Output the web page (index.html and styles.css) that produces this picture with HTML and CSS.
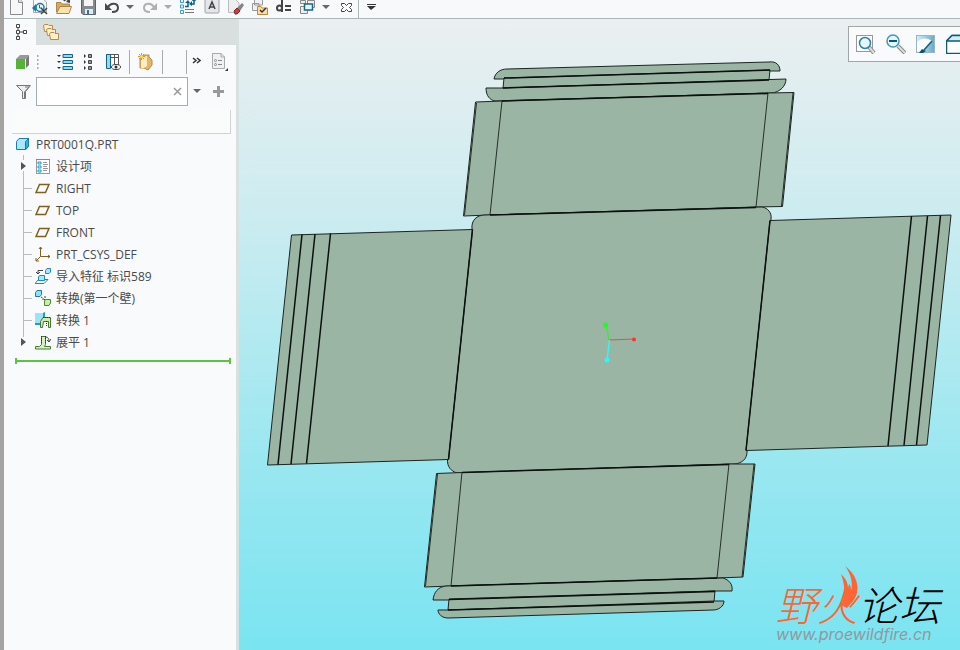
FILE: index.html
```html
<!DOCTYPE html>
<html lang="zh-CN">
<head>
    <meta charset="UTF-8">
    <meta name="viewport" content="width=device-width, initial-scale=1.0">
    <title>PRT0001Q.PRT</title>
    <link rel="stylesheet" href="styles.css">
</head>
<body>
    <div class="app">
        <header class="quickbar">
            <button class="icon" aria-label="新建"><svg width="16" height="16"><path d="M2.500-1H10.500L14.500 3V15.500H2.500Z" fill="#f6f7f8" stroke="#8b8b8b"/><path d="M10.500-1V3.500H14.500" fill="#ddd" stroke="#8b8b8b"/></svg></button>
            <button class="icon" aria-label="检查"><svg width="16" height="16"><path d="M1.500 0V13.500H14.500V3L11 0" fill="#f6f7f8" stroke="#aaa"/><circle cx="8" cy="8.500" r="4" fill="#e4f6fc" stroke="#1d7aa5" stroke-width="1.500"/><path d="M0 9L4 5V13Z" fill="#1d7aa5"/><path d="M7.500 6V9H10" fill="none" stroke="#1d7aa5"/><path d="M9 9L15 15M15 9L9 15" stroke="#444" stroke-width="1.500"/></svg></button>
            <button class="icon" aria-label="打开"><svg width="16" height="16"><path d="M.500 13V3.500H5L6.500 5H13.500V8" fill="#d8a760" stroke="#b08443"/><path d="M.500 14.500L4 7.500H15.500L13 14.500Z" fill="#fbe3ab" stroke="#b08443"/><path d="M8 2C9 0 11 0 13 1" fill="none" stroke="#444" stroke-width="2"/><path d="M14-1V4L10 3Z" fill="#444"/></svg></button>
            <button class="icon" aria-label="保存"><svg width="16" height="16"><path d="M1.500 0H15.500V15.500H3L1.500 14Z" fill="#858a8e" stroke="#606568"/><path d="M4 0H13V7H4Z" fill="#f5f5f5"/><path d="M5 10H13V15H5Z" fill="#d9edf6"/><path d="M7 11H9V15H7Z" fill="#3c7390"/></svg></button>
            <div class="split">
                <button class="icon" aria-label="撤消"><svg width="16" height="16"><path d="M4 8C7 3 14 4 14 9C14 12 11 13 8 13" fill="none" stroke="#444b4d" stroke-width="2"/><path d="M1 4V11H8Z" fill="#444b4d"/></svg></button>
                <button class="arrow" aria-label="撤消列表"><svg width="8" height="16"><path d="M0 6H8L4 10Z" fill="#666"/></svg></button>
            </div>
            <div class="split">
                <button class="icon" aria-label="重做"><svg width="16" height="16"><path d="M12 8C9 3 2 4 2 9C2 12 5 13 8 13" fill="none" stroke="#adb1b2" stroke-width="2"/><path d="M15 4V11H8Z" fill="#adb1b2"/></svg></button>
                <button class="arrow" aria-label="重做列表"><svg width="8" height="16"><path d="M0 6H8L4 10Z" fill="#aaa"/></svg></button>
            </div>
            <button class="icon" aria-label="重新生成"><svg width="16" height="16"><path d="M.500 0H3.500V3.500H.500ZM.500 6H3.500V9H.500ZM.500 11.500H3.500V14.500H.500Z" fill="#e5f7ff" stroke="#3a9cc6"/><path d="M5 10.500H14M5 13.500H14" stroke="#777"/><path d="M5 7.500H8V3M14 2V5H11" fill="none" stroke="#0c5d87" stroke-width="1.500"/><path d="M5 4L8 1L10 4ZM12 2L14-1L16 2ZM12 2V7L9 5Z" fill="#0c5d87"/></svg></button>
            <button class="icon" aria-label="注释"><svg width="16" height="16"><rect x="1" y="-1" width="14" height="15" rx="1" fill="#e3e7ea" stroke="#9da4a8"/><path d="M5 10L8 3L11 10M6 8H10" fill="none" stroke="#444" stroke-width="1.500"/></svg></button>
            <button class="icon" aria-label="擦除"><svg width="16" height="16"><path d="M.500 0H7L11 4V13.500H.500Z" fill="#eceeef" stroke="#bbb"/><path d="M9 9L14 4L16 6L12 12Z" fill="#858585"/><path d="M6 12L9 9L12 12L9 15H7Z" fill="#c83f36" stroke="#8c2a22"/></svg></button>
            <button class="icon" aria-label="窗口检查"><svg width="16" height="16"><path d="M2.500 0H10.500V6H2.500ZM.500 4.500H7V11.500H.500Z" fill="#f0f1f2" stroke="#9a9a9a"/><path d="M5.500 7.500H9L10 9H15.500V15.500H5.500Z" fill="#fbdc9d" stroke="#b88a45"/><path d="M8 11L10 13L14 9" fill="none" stroke="#333" stroke-width="1.500"/></svg></button>
            <button class="icon" aria-label="关系"><svg width="16" height="16"><path d="M6-1V13" stroke="#444" stroke-width="2"/><circle cx="3.500" cy="9" r="2.500" fill="none" stroke="#444" stroke-width="2"/><path d="M9 7H15M9 11H15" stroke="#444" stroke-width="2"/></svg></button>
            <div class="split">
                <button class="icon" aria-label="窗口"><svg width="16" height="16"><path d="M7.500 1.500H14.500V8.500H7.500ZM.500 1.500H5.500V4.500H.500ZM.500 7.500H7.500V14.500H.500Z" fill="#edf0f1" stroke="#888"/><rect x="4.500" y="5" width="8" height="6" fill="#e5f8ff" stroke="#1b668b" stroke-width="1.500"/></svg></button>
                <button class="arrow" aria-label="窗口列表"><svg width="8" height="16"><path d="M0 6H8L4 10Z" fill="#666"/></svg></button>
            </div>
            <button class="icon" aria-label="关闭"><svg width="16" height="16"><path d="M3.500 4.500H6.500L8.500 6.500L10.500 4.500H13.500V6.500L11.500 8.500L13.500 10.500V12.500H10.500L8.500 10.500L6.500 12.500H3.500V10.500L5.500 8.500L3.500 6.500Z" fill="#fff" stroke="#444"/></svg></button>
            <span class="quickbar-divider"></span>
            <button class="arrow" aria-label="自定义"><svg width="9" height="16"><path d="M0 5.500H9" stroke="#333"/><path d="M0 7H9L4 11Z" fill="#333"/></svg></button>
        </header>

        <main class="workspace">
            <aside class="sidebar">
                <div class="tabs">
                    <button class="tab active" aria-label="模型树"><svg width="16" height="18"><path d="M4 5V13M4 9H10" stroke="#444"/><path d="M2.500 1.500H5.500V4.500H2.500ZM2.500 7.500H5.500V10.500H2.500ZM2.500 13.500H5.500V16.500H2.500ZM9.500 7.500H12.500V10.500H9.500Z" fill="#fff" stroke="#444"/></svg></button>
                    <button class="tab" aria-label="层"><svg width="18" height="18"><g fill="#fff0cc" stroke="#b78a45"><path d="M.500 2.500L2 1.500H5L6 2.500H9.500V8.500H1.500Z"/><path d="M3.500 6.500L5 5.500H8L9 6.500H12.500V12.500H4.500Z"/><path d="M6.500 10.500L8 9.500H11L12 10.500H15.500V16.500H7.500Z"/></g></svg></button>
                </div>

                <div class="tree-tools">
                    <button class="icon" aria-label="模型"><svg width="14" height="18"><path d="M1 6L5 2H14L11 6Z" fill="#999"/><path d="M11 6L14 2V12L11 15Z" fill="#777"/><path d="M1 6H10V16H1Z" fill="#55b435"/></svg></button>
                    <svg width="4" height="18"><path d="M0 2V17" stroke="#aaa" stroke-width="3" stroke-dasharray="2 2"/></svg>
                    <button class="icon tool-list" aria-label="展开"><svg width="16" height="18"><path d="M0 2H4L2 4ZM0 8H4L2 10ZM0 14H4L2 16Z" fill="#333"/><path d="M6 1.500H15.500V4.500H6ZM6 7.500H15.500V10.500H6ZM6 13.500H15.500V16.500H6Z" fill="#88dcf8" stroke="#176487"/></svg></button>
                    <button class="icon" aria-label="收起"><svg width="16" height="18"><path d="M3 1V5L5 3ZM3 7V11L5 9ZM3 13V17L5 15Z" fill="#333"/><path d="M7.500 1.500H10.500V4.500H7.500ZM7.500 7.500H10.500V10.500H7.500ZM7.500 13.500H10.500V16.500H7.500Z" fill="#999" stroke="#444"/></svg></button>
                    <button class="icon" aria-label="树列"><svg width="16" height="18"><path d="M1.500 1.500H13.500V14.500H1.500Z" fill="#fff" stroke="#555"/><path d="M1.500 1.500H5.500V15.500H1.500Z" fill="#88dcf8" stroke="#176487"/><path d="M9.500 1V11M5 4.500H14" stroke="#555"/><ellipse cx="11" cy="14" rx="4.500" ry="2.500" fill="#fff" stroke="#444"/><circle cx="11" cy="14" r="1.500" fill="#333"/></svg></button>
                    <span class="tool-divider"></span>
                    <button class="icon" aria-label="新建层"><svg width="16" height="18"><path d="M5 2H11V4L14 7V12L10 17L6 15H2V5Z" fill="#e3b46c" stroke="#bd8c46"/><path d="M3 4L9 3V13L6 15H3Z" fill="#ffedbc"/><path d="M3.500 0V7M0 3.500H7M1 1L6 6M6 1L1 6" stroke="#ef8c20"/><circle cx="3.500" cy="3.500" r="1.500" fill="#ffdf55"/></svg></button>
                    <span class="tool-divider"></span>
                    <span class="tool-divider tool-divider-last"></span>
                    <button class="more" aria-label="更多"><svg width="9" height="18"><path d="M1 5L4 7.500L1 10M5 5L8 7.500L5 10" fill="none" stroke="#333" stroke-width="1.500"/></svg></button>
                    <button class="icon" aria-label="显示选项"><svg width="18" height="18"><path d="M1.500 .500H10L13.500 4V15.500H1.500Z" fill="#eff1f3" stroke="#aaa"/><path d="M10 0V4H14" fill="none" stroke="#aaa"/><path d="M7 7.500H11M7 11.500H11" stroke="#888"/><circle cx="4.500" cy="7.500" r="1" fill="none" stroke="#888"/><circle cx="4.500" cy="11.500" r="1" fill="none" stroke="#888"/><path d="M17 15V18H14Z" fill="#333"/></svg></button>
                </div>

                <div class="filter">
                    <svg width="15" height="16"><path d="M.500 1.500H14.500L9.500 7.500V14.500H6.500V7.500Z" fill="#eee" stroke="#777"/><path d="M9 3H13L8.500 8V14" fill="none" stroke="#777"/></svg>
                    <div class="filter-box">
                        <input type="text" id="filter" aria-label="过滤">
                        <button class="clear" aria-label="清除"><svg width="9" height="9"><path d="M1 1L8 8M8 1L1 8" stroke="#999" stroke-width="1.500"/></svg></button>
                    </div>
                    <button class="arrow" aria-label="过滤选项"><svg width="8" height="16"><path d="M0 5H8L4 9Z" fill="#666"/></svg></button>
                    <button class="add" aria-label="添加"><svg width="12" height="16"><path d="M0 7.500H11M5.500 2V13" stroke="#999" stroke-width="3"/></svg></button>
                </div>

                <div class="tree-head"></div>

                <ul class="tree">
                    <li class="root"><svg width="16" height="16"><path d="M.500 5.500L3 2.500H12.500V10L10 13.500H.500Z" fill="#a8e8fb" stroke="#1e7da5"/><path d="M9.500 5.500L12.500 2.500V10L9.500 13.500Z" fill="#39add5" stroke="#1e7da5"/></svg><span>PRT0001Q.PRT</span></li>
                    <li><button class="twig toggle first" aria-label="展开设计项"></button><svg width="16" height="16"><rect x="1.500" y="1.500" width="13" height="14" fill="#fff" stroke="#999"/><path d="M1 1.500H15" stroke="#32a5d0"/><path d="M3 4H6V6H3ZM3 8H6V10H3ZM3 12H6V14H3Z" fill="#fff" stroke="#179bd0"/><path d="M8 4.500H12M8 6.500H13M8 8.500H12M8 10.500H13M8 12.500H12" stroke="#999"/></svg><span>设计项</span></li>
                    <li><span class="twig"></span><svg width="16" height="16"><path d="M4.500 4.500H14L10.500 12.500H1Z" fill="none" stroke="#80601f" stroke-width="1.500"/></svg><span>RIGHT</span></li>
                    <li><span class="twig"></span><svg width="16" height="16"><path d="M4.500 4.500H14L10.500 12.500H1Z" fill="none" stroke="#80601f" stroke-width="1.500"/></svg><span>TOP</span></li>
                    <li><span class="twig"></span><svg width="16" height="16"><path d="M4.500 4.500H14L10.500 12.500H1Z" fill="none" stroke="#80601f" stroke-width="1.500"/></svg><span>FRONT</span></li>
                    <li><span class="twig"></span><svg width="16" height="16"><path d="M5.500 1V10.500H15M5.500 10.500L1 15M4 3L5.500 1L7 3M13 9L15 10.500L13 12M1 12V15H4" fill="none" stroke="#80601f"/></svg><span>PRT_CSYS_DEF</span></li>
                    <li><span class="twig"></span><svg width="16" height="16"><path d="M10.500 2.500L12 .500H15.500V4L14 5.500H10.500ZM3.500 8.500L5 7.500H9.500V12.500H3.500Z" fill="#a8e8fb" stroke="#1e8ab5"/><path d="M3 12L0 15.500H9L13 11.500H10" fill="none" stroke="#1e8ab5"/><path d="M3 5V2.500H8M1 4L3 6L5 4" fill="none" stroke="#444"/></svg><span>导入特征 标识589</span></li>
                    <li><span class="twig"></span><svg width="16" height="16"><path d="M.500 2.500L2 .500H6.500V4.500L5 6.500H.500Z" fill="#8fdff8" stroke="#1e7da5"/><path d="M9.500 10.500L11 9.500H15.500V13L14 15.500H9.500Z" fill="#c6efae" stroke="#498b2e"/><path d="M6 7L9 9M10 6V9.500H7" fill="none" stroke="#444" stroke-dasharray="2 1"/></svg><span>转换(第一个壁)</span></li>
                    <li><span class="twig"></span><svg width="16" height="16"><path d="M0 1H8V10L5 13H0Z" fill="#9ee3f7"/><path d="M8 1L10 0V6L6 11L8 8Z" fill="#2b9ac2"/><path d="M0 11H5V13H0Z" fill="#2b9ac2"/><path d="M5.500 9.500L8 5.500H15.500V15.500H13.500V9.500H8.500L7.500 15.500H5.500Z" fill="#c6efae" stroke="#47772f"/><path d="M8 5.500H15.500M11.500 9V14" stroke="#333" stroke-dasharray="1 1"/></svg><span>转换 1</span></li>
                    <li><button class="twig toggle last" aria-label="展开展平 1"></button><svg width="16" height="16"><path d="M.500 12.500H4.500L6.500 10.500V2.500H10.500V10.500L9.500 12.500H15.500V15H.500Z" fill="#d4f0c5" stroke="#467b32"/><path d="M6.500 2V9M10.500 2V10" stroke="#333" stroke-dasharray="1 1"/><path d="M11 3C13 3 14 5 14 7M12 6L14 8L16 5" fill="none" stroke="#444"/></svg><span>展平 1</span></li>
                </ul>
                <div class="insert-line"></div>
            </aside>

            <section class="viewport">
                <svg class="model" viewBox="239 19 721 631" role="img" aria-label="钣金展平模型">
                    <g class="plate">
                        <path d="M494 79C495 73 500 69 507 69L769 62C776 61 780 65 780 71H770L504 79Z"/>
                        <path d="M504 78L770 70L769 80L503 88Z"/>
                        <path d="M486 88H503L786 79C786 86 780 92 772 93L495 101C490 100 486 96 486 88Z"/>
                        <path d="M475.500 102L502 101L768 93L794 92.500L782.500 206.500L756 207L490 215L463.500 216Z"/>
                        <path d="M472 229C471 220 477 215 485 215L762 207C768 208 772 213 771 219L747 452C747 459 742 463 735 464L457 473C451 471 447 467 447.500 459Z"/>
                        <path d="M291.500 235L472.500 229.500L448.500 459.500L267.500 465Z"/>
                        <path d="M770 220.500L951 215L927 445L746 450.500Z"/>
                        <path d="M436.500 473.500L462 472.500L729 464L755 464L743 577L717 578L451 586L424.500 587Z"/>
                        <path d="M433 600C434 592 438 587 446 586L723 578C729 580 733 584 732 591H715L449 600Z"/>
                        <path d="M449 599L715 591L714 602L448 610Z"/>
                        <path d="M438 610H448L714 601H724C724 606 719 610 713 610L448 618C442 618 438 614 438 610Z"/>
                    </g>
                    <g class="edges">
                        <path d="M502 101L490 215M768 93L756 207M462 472L451 586M729 464L717 578"/>
                        <path d="M476.500 103L464.500 215M793 93L781.500 206M437.500 474L425.500 586M754 464L742 577"/>
                    </g>
                    <g class="folds">
                        <path d="M302 234.500L278 464.500M315 234L291 464M330.500 233.500L306.500 463.500"/>
                        <path d="M911.500 216L888 446M927.500 216L904 445.500M940.500 215.500L916.500 445"/>
                        <path d="M472.500 229.500L448.500 459.500M770 220.500L746 450.500M490 215L756 207.500M462 472.500L729 464.500"/>
                        <path d="M504 78L770 70M503 88L769 80M502 101L768 93.500M451 586L717 578M449 599.500L715 591.500M448 610L714 602"/>
                    </g>
                    <path d="M609 340L606 325" stroke="#43e83b" stroke-width="1.500"/>
                    <path d="M609 340L634 339" stroke="#f04a43"/>
                    <path d="M609.500 340L607 360" stroke="#3df3f2" stroke-width="1.500"/>
                    <circle cx="605.500" cy="325" r="2.500" fill="#22fa25"/>
                    <circle cx="634" cy="339.500" r="2" fill="#ff3232"/>
                    <circle cx="607" cy="360" r="2.500" fill="#28fafa"/>
                </svg>

                <div class="view-tools">
                    <button class="view-icon" aria-label="重新调整"><svg width="20" height="20"><rect x=".500" y="1.500" width="16" height="16" fill="#fff" stroke="#999"/><path d="M13 13L18 19" stroke="#888" stroke-width="4"/><path d="M13 13L18 19" stroke="#ddd" stroke-width="2"/><circle cx="9" cy="9" r="5.500" fill="#e4f7fd" stroke="#327f9f" stroke-width="1.500"/></svg></button>
                    <button class="view-icon" aria-label="缩小"><svg width="20" height="20"><path d="M12 12L19 19" stroke="#888" stroke-width="4"/><path d="M12 12L19 19" stroke="#ddd" stroke-width="2"/><circle cx="7" cy="7" r="6" fill="#e4f7fd" stroke="#4796b4" stroke-width="1.500"/><path d="M3 7H11" stroke="#0d5476" stroke-width="2"/></svg></button>
                    <button class="view-icon" aria-label="重画"><svg width="20" height="20"><defs><linearGradient id="repaint"><stop offset="0" stop-color="#d5f1f8"/><stop offset="1" stop-color="#65abc5"/></linearGradient></defs><rect x=".500" y="1.500" width="18" height="17" fill="url(#repaint)" stroke="#99b7c2"/><path d="M1 8C6 3 12 4 16 7L7 16L1 18Z" fill="#fff"/><path d="M16 7L8 16" stroke="#165f7c" stroke-width="1.500"/><path d="M3 19L6 15L10 17L7 19Z" fill="#0d5370"/></svg></button>
                    <button class="view-icon" aria-label="显示样式"><svg width="20" height="20"><path d="M.500 7L6 1.500H19V19.500H.500Z" fill="#fff" stroke="#12587b" stroke-width="1.500"/><path d="M.500 7L6 1.500H19V7Z" fill="#caf1fb" stroke="#12587b" stroke-width="1.500"/></svg></button>
                </div>

                <div class="watermark">
                    <div class="brand"><span class="brand-hot">野火</span>论坛</div>
                    <div class="site">www.proewildfire.cn</div>
                    <svg class="flame" width="20" height="44"><path d="M4 0C15 8 19 20 15 30C13 35 9 38 6 42L0 39C4 32 5 22 0 8C4 12 7 16 7 22L8 18C10 20 10 22 10 25C12 17 10 8 4 0Z" fill="#ff6434"/></svg>
                </div>
            </section>
        </main>
    </div>
</body>
</html>
```
FILE: styles.css
```css
* {
    box-sizing: border-box;
}
body {
    margin: 0;
    font-family: "Open Sans", "Noto Sans CJK SC", sans-serif;
    font-size: 12px;
    color: #4a4a4a;
}
button {
    display: flex;
    flex: none;
    padding: 0;
    border: none;
    background: none;
    cursor: pointer;
}
svg {
    display: block;
    flex: none;
}
.app {
    display: flex;
    flex-direction: column;
    height: 100vh;
    border-left: 4px solid #a5a2a2;
    overflow: hidden;
}

/* barre du haut */
.quickbar {
    display: flex;
    align-items: flex-end;
    gap: 8px;
    flex: none;
    height: 19px;
    padding: 0 4px 3px;
    background: #f7f9fb;
    border-bottom: 1px solid #a9b9b9;
    overflow: hidden;
}
.split {
    display: flex;
    gap: 6px;
}
.quickbar-divider {
    align-self: flex-end;
    width: 1px;
    height: 18px;
    margin: 0 0 -3px -4px;
    background: #a9b9b9;
}
.workspace {
    display: flex;
    flex: 1;
    min-height: 0;
}

/* arbre du modele */
.sidebar {
    flex: none;
    width: 235px;
    background: #f8fafc;
    border-right: 3px solid #d9e0e1;
}
.tabs {
    display: flex;
    height: 26px;
    background: #d9dfdf;
}
.tab {
    align-items: center;
    width: 32px;
    padding-left: 7px;
}
.tab.active {
    padding-left: 10px;
    background: #f8fafc;
}
.tree-tools {
    display: flex;
    align-items: center;
    gap: 8px;
    height: 31px;
    padding: 2px 0 0 11px;
}
.tool-list {
    margin-left: 8px;
}
.tool-divider {
    width: 1px;
    height: 24px;
    background: #aaa;
}
.tool-divider-last {
    margin-left: 15px;
}
.more {
    margin: 0 2px 0 -3px;
}
.filter {
    display: flex;
    align-items: center;
    gap: 5px;
    padding: 1px 11px 0 12px;
}
.filter-box {
    display: flex;
    align-items: center;
    flex: 1;
    min-width: 0;
    height: 29px;
    padding-right: 5px;
    background: #fff;
    border: 1px solid #9eafb0;
}
.filter-box input {
    flex: 1;
    min-width: 0;
    height: 24px;
    border: none;
    outline: none;
    background: none;
    font: inherit;
}
.add {
    margin-left: 7px;
}
.tree-head {
    height: 24px;
    margin: 4px 5px 0 8px;
    background: #fafbfb;
    border-right: 1px solid #cfd3d4;
    border-bottom: 1px solid #cfd3d4;
}
.tree {
    margin: -1px 0 0;
    padding: 0 0 0 12px;
    list-style: none;
}
.tree li {
    display: flex;
    align-items: center;
    height: 22px;
    white-space: nowrap;
}
.tree li > span:last-child {
    margin-left: 5px;
}
.tree .root > span:last-child {
    margin-left: 4px;
}
.twig {
    flex: none;
    width: 19px;
    height: 22px;
    background: linear-gradient(#bbb, #bbb) 7px 0 / 1px 100% no-repeat,
                linear-gradient(#bbb, #bbb) 7px 11px / 9px 1px no-repeat;
}
.toggle {
    align-items: center;
    padding-left: 5px;
}
.toggle::before {
    content: "";
    border: 4px solid transparent;
    border-left: 5px solid #555;
    border-right: none;
}
.toggle.first {
    background: linear-gradient(#bbb 5px, transparent 5px, transparent 16px, #bbb 16px) 7px 0 / 1px 100% no-repeat;
}
.toggle.last {
    background: linear-gradient(#bbb, #bbb) 7px 0 / 1px 6px no-repeat;
}
.insert-line {
    height: 6px;
    margin: 5px 5px 0 11px;
    border: solid #5fc342;
    border-width: 0 2px;
    background: linear-gradient(#5fc342, #5fc342) center / 100% 2px no-repeat;
}

/* zone graphique */
.viewport {
    position: relative;
    flex: 1;
    min-width: 0;
    background: linear-gradient(#ebeff0, #cdecf0 30%, #9ae7f0 70%, #7ae4f1);
    overflow: hidden;
}
.model {
    width: 100%;
    height: 100%;
}
.plate {
    fill: #9ab5a4;
    stroke: #1c2420;
    stroke-width: 1;
}
.edges {
    fill: none;
    stroke: #26302b;
    stroke-width: 1;
}
.folds {
    fill: none;
    stroke: #0c100e;
    stroke-width: 1.5;
}
.view-tools {
    position: absolute;
    top: 7px;
    right: 0;
    display: flex;
    align-items: center;
    gap: 10px;
    width: 112px;
    height: 36px;
    padding-left: 7px;
    background: #f8fafc;
    border: 1px solid #a3a6a8;
    border-right: none;
    overflow: hidden;
}
.watermark {
    position: absolute;
    right: 20px;
    bottom: 8px;
    white-space: nowrap;
}
.brand {
    margin-bottom: 2px;
    font-family: "Noto Sans CJK SC", sans-serif;
    font-size: 41px;
    font-style: italic;
    font-weight: 300;
    line-height: 42px;
    color: #000;
}
.brand-hot {
    color: #ff6434;
}
.site {
    font-family: Inter, "Liberation Sans", sans-serif;
    font-size: 16px;
    font-style: italic;
    line-height: 16px;
    color: #8e9a9d;
}
.flame {
    position: absolute;
    top: -16px;
    left: 65px;
}
```
